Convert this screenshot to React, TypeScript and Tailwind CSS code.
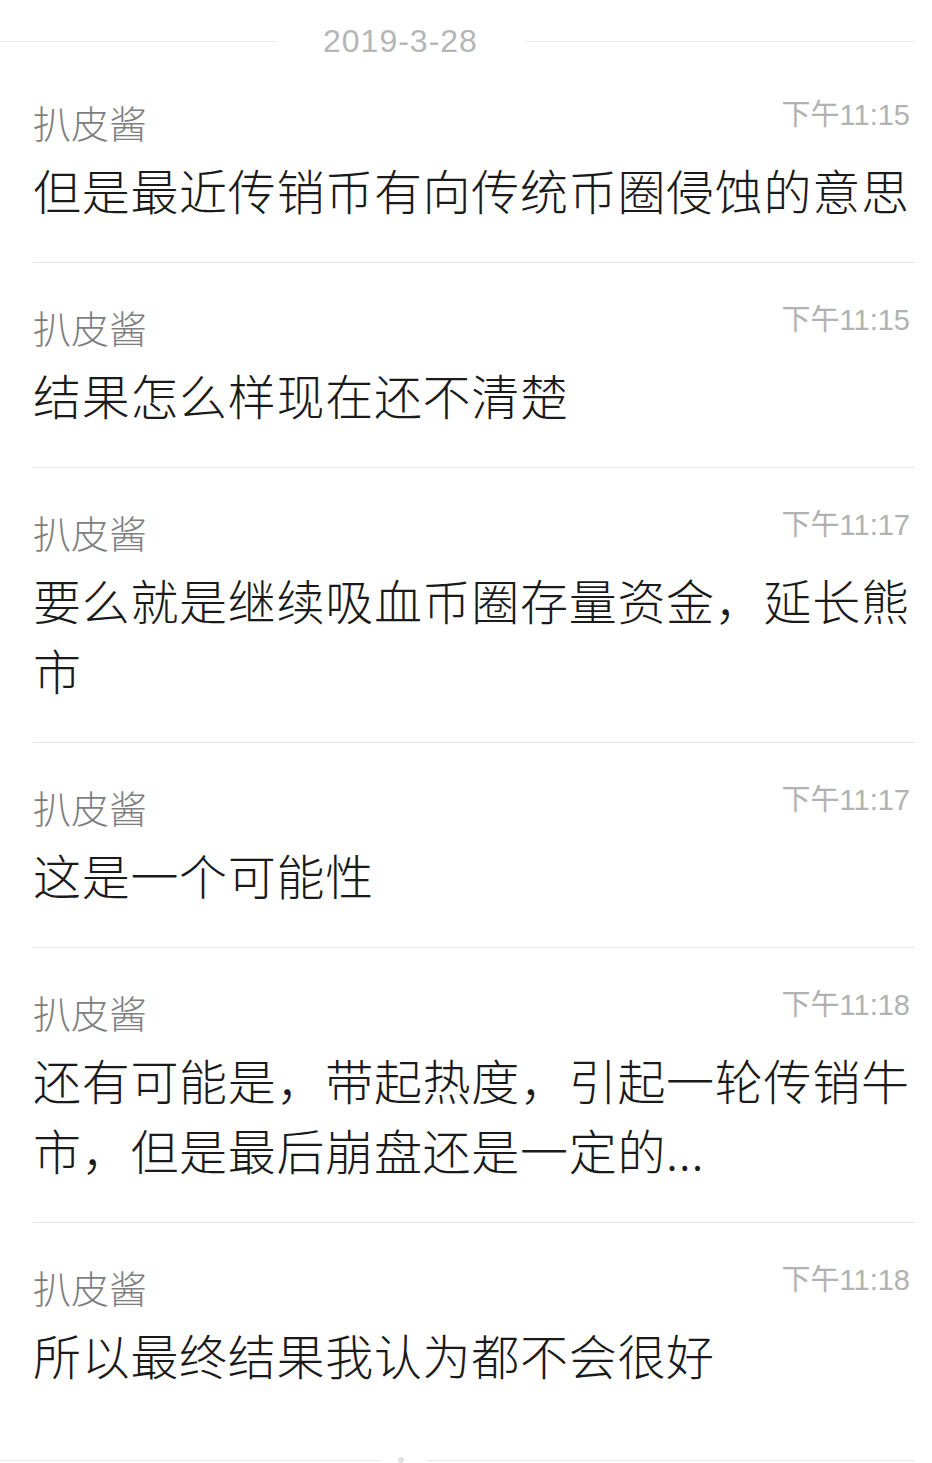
import React from 'react';

type Message = { id: number; name: string; time: string; text: string };

const MESSAGES: Message[] = [
  { id: 1, name: '扒皮酱', time: '下午11:15', text: '但是最近传销币有向传统币圈侵蚀的意思' },
  { id: 2, name: '扒皮酱', time: '下午11:15', text: '结果怎么样现在还不清楚' },
  { id: 3, name: '扒皮酱', time: '下午11:17', text: '要么就是继续吸血币圈存量资金，延长熊市' },
  { id: 4, name: '扒皮酱', time: '下午11:17', text: '这是一个可能性' },
  { id: 5, name: '扒皮酱', time: '下午11:18', text: '还有可能是，带起热度，引起一轮传销牛市，但是最后崩盘还是一定的...' },
  { id: 6, name: '扒皮酱', time: '下午11:18', text: '所以最终结果我认为都不会很好' },
];

const font = "font-['Liberation_Sans','Noto_Sans_CJK_SC',sans-serif]";

const MessageRow: React.FC<{ msg: Message; first: boolean }> = ({ msg, first }) => {
  return (
    <div className={`ml-[33px] w-[882px] pt-[42px] pb-[38px] ${first ? '' : 'border-t border-[#e6e6e6]'}`}>
      <div className="flex justify-between items-center h-[44px] pr-[5px]">
        <span className="text-[38px] leading-[44px] font-light text-[#7e7e7e] font-['Noto_Sans_CJK_SC',sans-serif]">{msg.name}</span>
        <span className={`text-[29px] leading-[44px] text-[#b2b2b2] -mt-[14px] ${font}`}>{msg.time}</span>
      </div>
      <p className="mt-[10px] text-[48px] leading-[70px] tracking-[0.7px] font-light text-[#1a1a1a] font-['Noto_Sans_CJK_SC',sans-serif] break-all">
        {msg.text}
      </p>
    </div>
  );
};

const App: React.FC = () => {
  return (
    <div className="w-[932px] h-[1463px] bg-white overflow-hidden">
      <div className="h-[58px] pt-[24px]">
        <div className="flex items-center h-[34px]">
          <div className="w-[277px] h-px bg-[#e8e8e8]" />
          <span className={`ml-[46px] text-[32px] leading-[34px] tracking-[1px] text-[#b5b5b5] ${font}`}>2019-3-28</span>
          <div className="ml-[48px] w-[388px] h-px bg-[#e8e8e8]" />
        </div>
      </div>
      {MESSAGES.map((m, i) => (
        <MessageRow key={m.id} msg={m} first={i === 0} />
      ))}
      <div className="flex items-center mt-[30px]">
        <div className="w-[380px] h-px bg-[#e6e6e6]" />
        <div className="ml-[18px] w-[6px] h-[6px] rounded-full bg-[#e0e0e0]" />
        <div className="ml-[23px] w-[488px] h-px bg-[#e6e6e6]" />
      </div>
    </div>
  );
};

export default App;
